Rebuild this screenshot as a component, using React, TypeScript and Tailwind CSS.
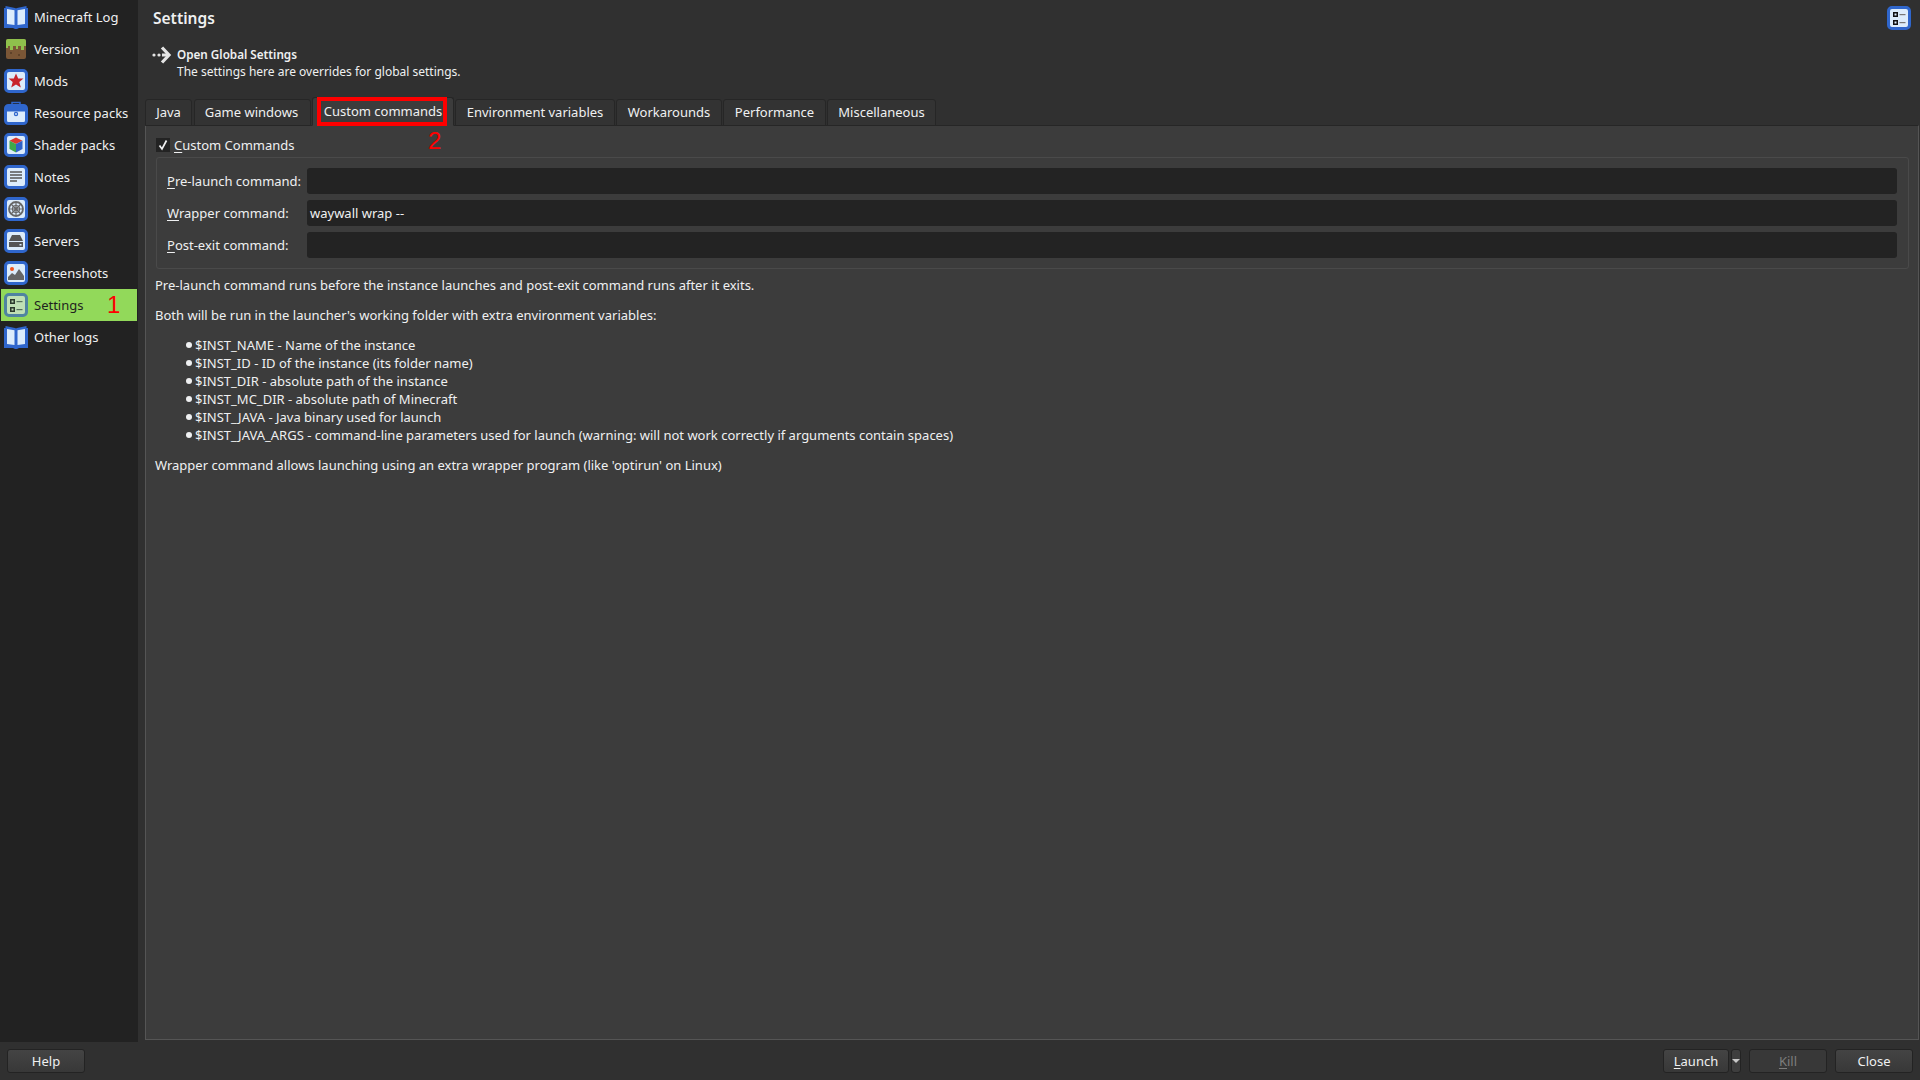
import React from "react";

const FONT = { fontFamily: '"Noto Sans", sans-serif' };

function Frame({ children, fill = "#dcecfb", stroke = "#2f66cc" }: { children?: React.ReactNode; fill?: string; stroke?: string }) {
  return (
    <svg width="24" height="24" viewBox="0 0 24 24" className="shrink-0">
      <rect x="1.500" y="1.500" width="21" height="21" rx="3.500" fill={fill} stroke={stroke} strokeWidth="3" />
      {children}
    </svg>
  );
}

function BookIcon() {
  return (
    <svg width="24" height="24" viewBox="0 0 24 24" className="shrink-0">
      <path d="M0 3h1.500V1l9.500 2 1 .6 1-.6 9.500-2v2H24v20h-9l-3 1.500-3-1.500H0z" fill="#2f66cc" />
      <path d="M3 4l7.500 1.300V20L3 19z M21 4l-7.500 1.300V20L21 19z" fill="#dcecfb" />
    </svg>
  );
}

function GrassIcon() {
  return (
    <svg width="24" height="24" viewBox="0 0 24 24" className="shrink-0">
      <rect x="2" y="2" width="20" height="20" rx="2" fill="#7a5636" />
      <path d="M2 4a2 2 0 0 1 2-2h16a2 2 0 0 1 2 2v5h-2v4h-3V9h-3v3h-2V9H9v4H6V9H4v2H2z" fill="#8fc04c" />
      <rect x="6" y="15" width="2" height="2" fill="#5f4229" />
      <rect x="14" y="17" width="2" height="2" fill="#5f4229" />
    </svg>
  );
}

function ChecklistGlyph({ box, line, fill }: { box: string; line: string; fill: string }) {
  return (
    <>
      <rect x="6" y="6" width="5" height="5" fill={box} />
      <rect x="7.500" y="7.500" width="2" height="2" fill={fill} />
      <rect x="6" y="14" width="5" height="5" fill={box} />
      <rect x="7.500" y="15.500" width="2" height="2" fill={fill} />
      <rect x="12.500" y="8" width="6" height="1.200" fill={line} />
      <rect x="12.500" y="16" width="6" height="1.200" fill={line} />
    </>
  );
}

const icons: Record<string, React.ReactNode> = {
  "Minecraft Log": <BookIcon />,
  Version: <GrassIcon />,
  Mods: (
    <Frame>
      <path d="M12 4.500l2.200 5h5.300l-4.200 3.500 1.500 5.500-4.800-3-4.800 3 1.500-5.500-4.200-3.500h5.300z" fill="#c8242c" />
    </Frame>
  ),
  "Resource packs": (
    <svg width="24" height="24" viewBox="0 0 24 24" className="shrink-0">
      <path d="M8 4V1.500h8V4" fill="none" stroke="#2f66cc" strokeWidth="1.500" />
      <rect x="1.500" y="4.500" width="21" height="18" rx="3" fill="#dcecfb" stroke="#2f66cc" strokeWidth="3" />
      <rect x="2" y="5" width="20" height="5.500" fill="#2f66cc" />
      <circle cx="12" cy="13" r="2.200" fill="#2f66cc" />
      <circle cx="12" cy="13" r="0.900" fill="#dcecfb" />
    </svg>
  ),
  "Shader packs": (
    <Frame>
      <path d="M12 4.500l6.500 3.200L12 11 5.500 7.700z" fill="#d8392f" />
      <path d="M5.500 7.700L12 11v8.500L5.500 16z" fill="#3ea84a" />
      <path d="M18.500 7.700L12 11v8.500l6.500-3.500z" fill="#2f62c8" />
    </Frame>
  ),
  Notes: (
    <Frame>
      <path d="M6 7h12M6 10h12M6 13h12M6 16h7" stroke="#555" strokeWidth="1.500" />
    </Frame>
  ),
  Worlds: (
    <Frame>
      <circle cx="12" cy="12" r="7" fill="none" stroke="#666" strokeWidth="1.800" />
      <path d="M7 7l10 10M17 7L7 17M5.500 12h13M12 5.500v13" stroke="#666" strokeWidth="1.200" />
      <circle cx="12" cy="12" r="3.500" fill="none" stroke="#666" strokeWidth="1.200" />
    </Frame>
  ),
  Servers: (
    <Frame>
      <path d="M8 6h8l3 6H5z" fill="#555" />
      <rect x="5" y="13" width="14" height="5" fill="#555" />
      <rect x="15.500" y="15" width="2" height="1.500" fill="#dcecfb" />
    </Frame>
  ),
  Screenshots: (
    <Frame>
      <circle cx="8" cy="8" r="2" fill="#f0541e" />
      <path d="M4 19v-3l4-4 3 2 4-6 3 4 2 3v4z" fill="#666" />
    </Frame>
  ),
  Settings: (
    <Frame fill="#bfe0b4" stroke="#4f84a0">
      <ChecklistGlyph box="#2b3a2b" line="#55705a" fill="#b9d8ae" />
    </Frame>
  ),
  "Other logs": <BookIcon />,
};

const sideItems = [
  "Minecraft Log",
  "Version",
  "Mods",
  "Resource packs",
  "Shader packs",
  "Notes",
  "Worlds",
  "Servers",
  "Screenshots",
  "Settings",
  "Other logs",
];

const tabs = [
  { label: "Java", w: "w-[47px]" },
  { label: "Game windows", w: "w-[117px]" },
  { label: "Custom commands", w: "w-[142px]", active: true },
  { label: "Environment variables", w: "w-[160px]" },
  { label: "Workarounds", w: "w-[106px]" },
  { label: "Performance", w: "w-[103px]" },
  { label: "Miscellaneous", w: "w-[109px]" },
];

const vars = [
  "$INST_NAME - Name of the instance",
  "$INST_ID - ID of the instance (its folder name)",
  "$INST_DIR - absolute path of the instance",
  "$INST_MC_DIR - absolute path of Minecraft",
  "$INST_JAVA - Java binary used for launch",
  "$INST_JAVA_ARGS - command-line parameters used for launch (warning: will not work correctly if arguments contain spaces)",
];

function Field({ mn, rest, value }: { mn: string; rest: string; value?: string }) {
  return (
    <div className="flex items-center h-[26px]">
      <div className="w-[140px] shrink-0 text-[#eff0f1] pt-[1px]">
        <u className="underline-offset-2">{mn}</u>
        {rest}
      </div>
      <div className="flex-1 h-[26px] rounded-[3px] bg-[#232323] pl-[3px] leading-[26px] text-[#eff0f1]">{value}</div>
    </div>
  );
}

function Btn({ w, children, disabled }: { w: string; children: React.ReactNode; disabled?: boolean }) {
  return (
    <div
      className={`${w} h-[24px] pt-[1px] flex items-center justify-center rounded-[3px] border border-[#232323] ${
        disabled ? "bg-[#383838] text-[#7d7d7d]" : "bg-gradient-to-b from-[#444444] to-[#383838] text-[#eff0f1]"
      }`}
    >
      {children}
    </div>
  );
}

export default function App() {
  return (
    <div className="w-[1920px] h-[1080px] overflow-hidden flex flex-col bg-[#303030] text-[13px] text-[#eff0f1] relative" style={FONT}>
      <div className="flex h-[1042px]">
        <div className="w-[138px] shrink-0 bg-[#222222] pt-[1px] pl-[1px] pr-[1px] flex flex-col">
          {sideItems.map((s) => (
            <div key={s} className={`h-[32px] flex items-center gap-[6px] pl-[3px] ${s === "Settings" ? "bg-[#92d95a] text-[#1f1f1f]" : ""}`}>
              {icons[s]}
              <span className="relative top-[1px]">{s}</span>
            </div>
          ))}
        </div>
        <div className="flex-1 flex flex-col pl-[7px] pr-[1px] pb-[2px]">
          <div className="h-[36px] flex items-center justify-between pl-[8px] pr-[8px]">
            <span className="text-[15.500px] font-semibold relative top-[1px]">Settings</span>
            <Frame>
              <ChecklistGlyph box="#111111" line="#777777" fill="#dcecfb" />
            </Frame>
          </div>
          <div className="h-[62px] flex items-start pl-[7px] pt-[9px] text-[12px]">
            <svg width="20" height="20" viewBox="0 0 20 20" className="shrink-0">
              <path d="M10 2.500L17 10l-7 7.500" fill="none" stroke="#e4e4e4" strokeWidth="3.200" />
              <path d="M10 10h5" stroke="#e4e4e4" strokeWidth="3" />
              <circle cx="2" cy="10" r="1.600" fill="#e4e4e4" />
              <circle cx="7" cy="10" r="1.600" fill="#e4e4e4" />
            </svg>
            <div className="ml-[5px] leading-[18px]">
              <div className="font-semibold text-[11.700px]">Open Global Settings</div>
              <div>The settings here are overrides for global settings.</div>
            </div>
          </div>
          <div className="flex items-end h-[28px] gap-[1px] relative z-10 -mb-[1px]">
            {tabs.map((t, i) => (
              <div
                key={t.label}
                className={`${t.w} ${i === 1 ? "ml-[1px]" : ""} flex items-center justify-center border border-[#262626] rounded-t-[3px] ${
                  t.active
                    ? "h-[29px] bg-[#3c3c3c] border-b-[#3c3c3c]"
                    : "h-[27px] bg-[#333333] pt-[1px]"
                }`}
              >
                <span className={i === 1 ? "relative -left-[1px]" : ""}>{t.label}</span>
              </div>
            ))}
          </div>
          <div className="flex-1 bg-[#3c3c3c] border border-[#555555] border-t-[#262626] pl-[10px] pr-[9px] pt-[12px]">
            <div className="flex items-center h-[14px] gap-[4px]">
              <div className="w-[14px] h-[14px] bg-[#232323] flex items-center justify-center">
                <svg width="12" height="12" viewBox="0 0 12 12">
                  <path d="M2.500 6.500L5 10 9.500 1.500" fill="none" stroke="#eff0f1" strokeWidth="1.700" />
                </svg>
              </div>
              <span className="pt-[1px]">
                <u className="underline-offset-2">C</u>ustom Commands
              </span>
            </div>
            <div className="mt-[5px] h-[112px] border border-[#4a4a4a] rounded-[3px] pl-[10px] pr-[11px] pt-[10px] flex flex-col gap-[6px]">
              <Field mn="P" rest="re-launch command:" />
              <Field mn="W" rest="rapper command:" value="waywall wrap --" />
              <Field mn="P" rest="ost-exit command:" />
            </div>
            <div className="-ml-[1px]">
              <div className="mt-[7px] leading-[18px] h-[18px]">Pre-launch command runs before the instance launches and post-exit command runs after it exits.</div>
              <div className="mt-[12px] leading-[18px] h-[18px]">Both will be run in the launcher's working folder with extra environment variables:</div>
              <div className="mt-[12px] pl-[31px]">
                {vars.map((v) => (
                  <div key={v} className="h-[18px] leading-[18px] flex items-center">
                    <span className="w-[6px] h-[6px] rounded-full bg-[#eff0f1] mr-[3px] shrink-0" />
                    <span>{v}</span>
                  </div>
                ))}
              </div>
              <div className="mt-[12px] leading-[18px]">Wrapper command allows launching using an extra wrapper program (like 'optirun' on Linux)</div>
            </div>
          </div>
        </div>
      </div>
      <div className="flex-1 flex items-start justify-between pt-[7px] pl-[7px] pr-[7px]">
        <Btn w="w-[78px]">Help</Btn>
        <div className="flex items-start">
          <Btn w="w-[66px]">
            <span>
              <u className="underline-offset-2">L</u>aunch
            </span>
          </Btn>
          <div className="ml-[2px] w-[10px] h-[24px] rounded-[3px] border border-[#232323] bg-[#3e3e3e] flex items-center justify-center">
            <div className="w-0 h-0 border-l-[4px] border-r-[4px] border-t-[4px] border-l-transparent border-r-transparent border-t-[#c8c8c8]" />
          </div>
          <div className="ml-[8px]">
            <Btn w="w-[78px]" disabled>
              <span>
                <u className="underline-offset-2">K</u>ill
              </span>
            </Btn>
          </div>
          <div className="ml-[8px]">
            <Btn w="w-[78px]">Close</Btn>
          </div>
        </div>
      </div>

      <div className="absolute left-[317px] top-[97px] w-[130px] h-[29px] border-[4px] border-[#fe0000] z-20" />
      <div className="absolute left-[428px] top-[127px] text-[#fe0000] text-[24px] leading-[28px] z-20" style={{ fontFamily: '"Liberation Sans", sans-serif' }}>2</div>
      <div className="absolute left-[107px] top-[291px] text-[#fe0000] text-[24px] leading-[28px] z-20" style={{ fontFamily: '"Liberation Sans", sans-serif' }}>1</div>
    </div>
  );
}
